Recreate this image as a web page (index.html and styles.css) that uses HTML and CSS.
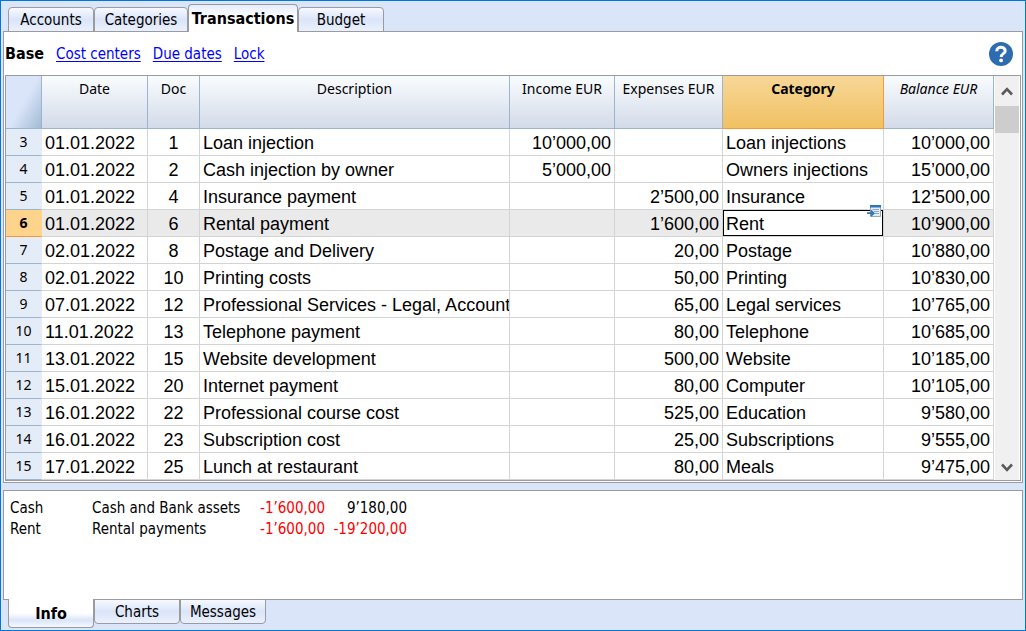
FILE: index.html
```html
<!DOCTYPE html>
<html lang="en">
<head>
<meta charset="utf-8">
<title>Transactions</title>
<link rel="stylesheet" href="styles.css">
</head>
<body>
<div class="window">
  <nav class="tabs tabs-top">
    <button class="tab tab-regular">Accounts</button>
    <button class="tab tab-wide">Categories</button>
    <button class="tab tab-widest active">Transactions</button>
    <button class="tab tab-regular">Budget</button>
  </nav>
  <main class="sheet">
    <div class="views">
      <strong>Base</strong>
      <a href="#cost">Cost centers</a>
      <a href="#due">Due dates</a>
      <a href="#lock">Lock</a>
      <button class="help" aria-label="Help">
        <svg width="24" height="24" viewBox="0 0 24 24"><circle cx="12" cy="12" r="12" fill="#2d6cae"/><path d="M7.7 9.2C7.9 3.8 16.2 4.2 16.2 8.9C16.2 11.8 12.2 11.5 12.2 15" fill="none" stroke="#fff" stroke-width="3"/><circle cx="12.1" cy="18.4" r="1.9" fill="#fff"/></svg>
      </button>
    </div>
    <div class="grid">
      <table class="ledger">
        <colgroup><col class="c-num"><col class="c-date"><col class="c-doc"><col><col class="c-income"><col class="c-expense"><col class="c-category"><col class="c-balance"></colgroup>
        <thead>
          <tr><th class="corner"></th><th>Date</th><th>Doc</th><th>Description</th><th>Income EUR</th><th>Expenses EUR</th><th class="current">Category</th><th class="computed">Balance EUR</th></tr>
        </thead>
        <tbody>
          <tr><th>3</th><td>01.01.2022</td><td class="mid">1</td><td>Loan injection</td><td class="amt">10’000,00</td><td class="amt"></td><td>Loan injections</td><td class="amt">10’000,00</td></tr>
          <tr><th>4</th><td>01.01.2022</td><td class="mid">2</td><td>Cash injection by owner</td><td class="amt">5’000,00</td><td class="amt"></td><td>Owners injections</td><td class="amt">15’000,00</td></tr>
          <tr><th>5</th><td>01.01.2022</td><td class="mid">4</td><td>Insurance payment</td><td class="amt"></td><td class="amt">2’500,00</td><td>Insurance</td><td class="amt">12’500,00</td></tr>
          <tr class="selected"><th>6</th><td>01.01.2022</td><td class="mid">6</td><td>Rental payment</td><td class="amt"></td><td class="amt">1’600,00</td><td class="focus">Rent<svg class="picker" width="14" height="12" viewBox="0 0 14 12"><path d="M3.5 .5h10v11h-10z" fill="#e6edf5" stroke="#9aa9b8"/><path d="M3 0h11v2.5H3z" fill="#2f75bb"/><path d="M5.5 4.5H12M7 6.5h5M7 8.5h5" stroke="#8aa8c8"/><path d="M0 8.2h5M3.8 5.4 6.6 8.2 3.8 11" fill="none" stroke="#2f75bb" stroke-width="1.8"/></svg></td><td class="amt">10’900,00</td></tr>
          <tr><th>7</th><td>02.01.2022</td><td class="mid">8</td><td>Postage and Delivery</td><td class="amt"></td><td class="amt">20,00</td><td>Postage</td><td class="amt">10’880,00</td></tr>
          <tr><th>8</th><td>02.01.2022</td><td class="mid">10</td><td>Printing costs</td><td class="amt"></td><td class="amt">50,00</td><td>Printing</td><td class="amt">10’830,00</td></tr>
          <tr><th>9</th><td>07.01.2022</td><td class="mid">12</td><td>Professional Services - Legal, Account</td><td class="amt"></td><td class="amt">65,00</td><td>Legal services</td><td class="amt">10’765,00</td></tr>
          <tr><th>10</th><td>11.01.2022</td><td class="mid">13</td><td>Telephone payment</td><td class="amt"></td><td class="amt">80,00</td><td>Telephone</td><td class="amt">10’685,00</td></tr>
          <tr><th>11</th><td>13.01.2022</td><td class="mid">15</td><td>Website development</td><td class="amt"></td><td class="amt">500,00</td><td>Website</td><td class="amt">10’185,00</td></tr>
          <tr><th>12</th><td>15.01.2022</td><td class="mid">20</td><td>Internet payment</td><td class="amt"></td><td class="amt">80,00</td><td>Computer</td><td class="amt">10’105,00</td></tr>
          <tr><th>13</th><td>16.01.2022</td><td class="mid">22</td><td>Professional course cost</td><td class="amt"></td><td class="amt">525,00</td><td>Education</td><td class="amt">9’580,00</td></tr>
          <tr><th>14</th><td>16.01.2022</td><td class="mid">23</td><td>Subscription cost</td><td class="amt"></td><td class="amt">25,00</td><td>Subscriptions</td><td class="amt">9’555,00</td></tr>
          <tr><th>15</th><td>17.01.2022</td><td class="mid">25</td><td>Lunch at restaurant</td><td class="amt"></td><td class="amt">80,00</td><td>Meals</td><td class="amt">9’475,00</td></tr>
        </tbody>
      </table>
      <div class="scrollbar">
        <button class="scroll-step" aria-label="Scroll up"><svg width="12" height="9" viewBox="0 0 12 9"><path d="M1 7.5 6 2.2 11 7.5" fill="none" stroke="#5a5a5a" stroke-width="2.6"/></svg></button>
        <div class="scroll-thumb"></div>
        <button class="scroll-step scroll-down" aria-label="Scroll down"><svg width="12" height="9" viewBox="0 0 12 9"><path d="M1 1.5 6 6.8 11 1.5" fill="none" stroke="#5a5a5a" stroke-width="2.6"/></svg></button>
      </div>
    </div>
  </main>
  <section class="info">
    <table class="summary">
      <tr><td class="s-account">Cash</td><td class="s-name">Cash and Bank assets</td><td class="s-change negative">-1’600,00</td><td class="s-total">9’180,00</td></tr>
      <tr><td class="s-account">Rent</td><td class="s-name">Rental payments</td><td class="s-change negative">-1’600,00</td><td class="s-total negative">-19’200,00</td></tr>
    </table>
  </section>
  <nav class="tabs tabs-bottom">
    <button class="tab tab-regular active">Info</button>
    <button class="tab tab-regular">Charts</button>
    <button class="tab tab-regular">Messages</button>
  </nav>
</div>
</body>
</html>
```

FILE: styles.css
```css
* { box-sizing: border-box; }

body {
  margin: 0;
  font-family: Tahoma, "DejaVu Sans Condensed", "Noto Sans", sans-serif;
  font-size: 15px;
  color: #000;
}

button { font: inherit; color: inherit; padding: 0; }

.window {
  display: flex;
  flex-direction: column;
  min-height: 100vh;
  padding: 3px 2px 2px;
  border: 1px solid #0078d7;
  background: #dbe5f9;
}

/* Tab strips */
.tabs { display: flex; padding: 0 5px; position: relative; }
.tabs-top { align-items: flex-end; margin-bottom: -1px; }
.tabs-bottom { align-items: flex-start; margin-top: -1px; }

.tab {
  height: 25px;
  border: 1px solid #9b9b9f;
  line-height: 22px;
  white-space: nowrap;
  background: linear-gradient(#f6f9ff, #dbe5f9 50%, #eaf0fc);
}
.tab-regular { width: 86px; }
.tab-wide { width: 94px; }
.tab-widest { width: 110px; }
.tabs-top .tab { border-radius: 4px 4px 0 0; }
.tabs-bottom .tab { padding-top: 1px; border-radius: 0 0 4px 4px; }
.tab.active { height: 28px; font-size: 16px; font-weight: bold; line-height: 26px; }
.tabs-top .active { border-bottom: 0; background: linear-gradient(#e6edfb, #fff 50%); }
.tabs-bottom .active { height: 29px; border-top: 0; background: linear-gradient(#fff 50%, #dbe5f9 75%, #f4f8ff); }

/* Main sheet */
.sheet { border: 1px solid #9b9b9f; padding: 0 1px 1px; background: #fff; }

.views { display: flex; align-items: center; gap: 12px; height: 43px; padding-right: 8px; line-height: 20px; }
.views strong { font-size: 16px; }
.views a { color: #00f; text-underline-offset: 2px; }
.help { display: flex; margin-left: auto; border: 0; background: none; }

.grid { display: flex; border: 1px solid #9b9b9f; }

.ledger {
  flex: 1;
  width: 0;
  table-layout: fixed;
  border-collapse: separate;
  border-spacing: 0;
}
.c-num { width: 36px; }
.c-date { width: 106px; }
.c-doc { width: 52px; }
.c-income { width: 105px; }
.c-expense { width: 108px; }
.c-category { width: 161px; }
.c-balance { width: 110px; }

.ledger th {
  padding: 0;
  font-family: "Noto Sans", "Open Sans", sans-serif;
  font-size: 14px;
  font-weight: normal;
  line-height: 20px;
  white-space: nowrap;
  border-right: 1px solid #9bb4cf;
  border-bottom: 1px solid #9bb4cf;
}
.ledger thead th {
  height: 53px;
  padding-top: 3px;
  vertical-align: top;
  background: linear-gradient(#f9fcfe, #d3dbe9);
}
.ledger thead .corner { background: linear-gradient(120deg, #dbe5f9 50%, #a3bbd5); }
.ledger thead .current {
  font-weight: bold;
  background: linear-gradient(#f7d797, #f1c163);
  border-color: #f09a38;
}
.ledger thead .computed { font-style: italic; }

.ledger tbody th {
  background: #e4ecf7;
  border-right-color: #e4ecf7;
}
.ledger td {
  height: 27px;
  padding: 2px 3px 0;
  overflow: hidden;
  font-family: "Liberation Sans", Arial, sans-serif;
  font-size: 18px;
  line-height: 24px;
  white-space: nowrap;
  border-right: 1px solid #d4d4d4;
  border-bottom: 1px solid #d4d4d4;
}
.ledger .mid { text-align: center; }
.ledger .amt { text-align: right; }
.selected td { background: #eaeaea; }
.ledger .selected th {
  font-weight: bold;
  background: #fed38b;
  border-right-color: #fed38b;
  border-bottom-color: #f09a38;
}
.ledger .focus {
  position: relative;
  overflow: visible;
  background: #fff;
  box-shadow: inset 0 0 0 1px #000;
}
.picker { position: absolute; top: -5px; right: 2px; }

/* Scrollbar */
.scrollbar {
  display: flex;
  flex-direction: column;
  width: 26px;
  border: solid #fff;
  border-width: 0 1px;
  background: #f0f0f0;
}
.scroll-step {
  display: flex;
  align-items: center;
  justify-content: center;
  height: 30px;
  border: 0;
  background: none;
}
.scroll-down { height: 26px; margin-top: auto; }
.scroll-thumb { height: 27px; background: #cdcdcd; }

/* Information panel */
.info {
  flex: 1;
  margin-top: 7px;
  padding: 7px 6px;
  border: 1px solid #9b9b9f;
  background: #fff;
}
.summary { border-collapse: collapse; }
.summary td { height: 21px; padding: 0; line-height: 21px; white-space: nowrap; }
.s-account { width: 82px; }
.s-name { width: 151px; }
.s-change, .s-total { width: 82px; text-align: right; }
.negative { color: #f00; }
```
